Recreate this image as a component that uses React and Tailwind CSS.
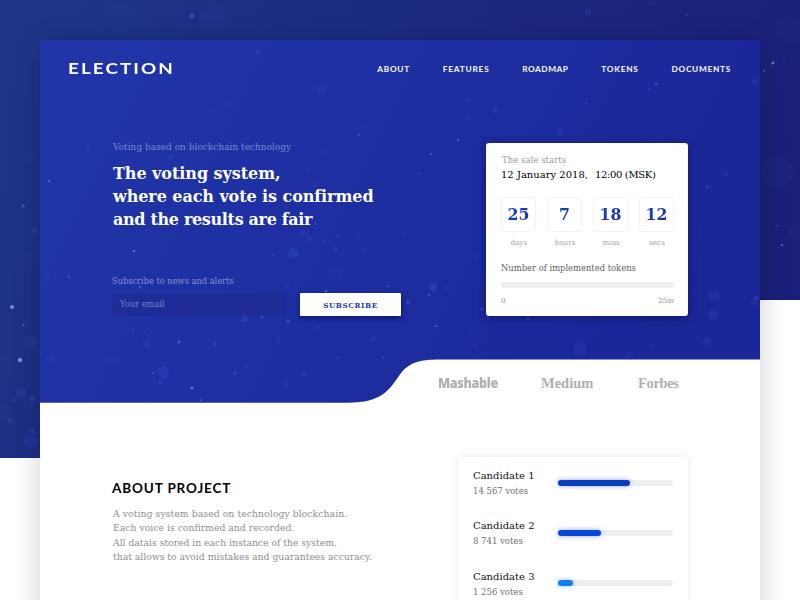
const slab = "font-['DejaVu_Serif',serif]";
const slabNarrow = "font-['DejaVu_Serif_Condensed','DejaVu_Serif',serif]";

// x, y, radius, colour, opacity
const backdropDots = [
  [192, 16, 3, '#3a52dc', 0.6], [192, 16, 1.5, '#5068f5', 0.8], [213, 20, 15, '#2a4297', 0.35],
  [120, 18, 17, '#2a4297', 0.25], [183, 26, 9, '#2a4297', 0.2], [455, 12, 18, '#2a3b9a', 0.2],
  [588, 12, 3.5, '#3046c0', 0.6], [652, 0, 6, '#3046c0', 0.25], [687, 15, 1, '#4a5cd0', 0.6],
  [773, 63, 1.5, '#8d9cf0', 0.9], [764, 71, 1, '#7080e0', 0.8], [784, 62, 3, '#2f3fa8', 0.4],
  [782, 245, 1, '#8d9cf0', 0.9], [777, 226, 1.5, '#3346b0', 0.6], [796, 232, 8, '#2a3b9a', 0.25],
  [778, 172, 16, '#24308c', 0.4], [790, 30, 14, '#26328f', 0.35],
  [23, 206, 2.5, '#3a50c4', 0.6], [23, 206, 1, '#6a7ff0', 0.7], [35, 230, 3, '#3a50c4', 0.6],
  [28, 158, 7, '#2a4297', 0.3], [38, 55, 8, '#2a4297', 0.25], [28, 258, 9, '#2a4297', 0.2],
  [12, 307, 2, '#93a4ff', 1], [23.5, 325, 1, '#7d8ff0', 0.9], [20, 360, 2.2, '#8fa0ff', 1],
  [30, 342, 7, '#2f44b0', 0.5], [5, 358, 4, '#2f44b0', 0.45], [21, 393, 5.5, '#3346b8', 0.6],
  [32, 399, 2.5, '#4258d8', 0.8], [14, 400, 1.2, '#4258d8', 0.7], [10, 421, 2.2, '#4056cc', 0.7],
  [32, 431, 3, '#3348bf', 0.7], [31, 442, 7, '#2c40b8', 0.6], [5, 412, 8, '#2a3f9f', 0.3],
];

const heroDots = [
  [218, 12, 1.5, '#3d66e0', 0.7], [281, 49, 5, '#2f50c8', 0.4], [187, 63, 3.5, '#2b48c0', 0.4],
  [170, 69, 3, '#2b48c0', 0.35], [319, 95, 1, '#6d8cf5', 0.7], [323, 90, 6, '#2b48c0', 0.25],
  [9, 141, 1, '#7d94ff', 0.9], [48, 108, 3, '#2f50c8', 0.5], [131, 117, 3.5, '#2b55d0', 0.5],
  [94, 211, 1, '#8fa8ff', 1], [29, 237, 1.2, '#5574e8', 0.7], [7, 236, 5, '#2d49c0', 0.35],
  [100, 247, 1.5, '#4d70ec', 0.8], [263, 193, 3.5, '#3457d4', 0.5], [269, 198, 3, '#3457d4', 0.45],
  [253, 213, 5, '#3c60dc', 0.6], [233, 215, 1, '#4d70ec', 0.6], [298, 196, 2, '#3457d4', 0.6],
  [295, 209, 2.5, '#3457d4', 0.5], [325, 210, 2.5, '#3457d4', 0.5], [284, 202, 1.3, '#3c60dc', 0.6],
  [276, 184, 1, '#4d70ec', 0.6], [269, 131, 1, '#4d70ec', 0.5], [286, 112, 3.5, '#2b48c0', 0.5],
  [275, 146, 4, '#2b48c0', 0.35], [319, 197, 1, '#4060dc', 0.6], [286, 251, 1.3, '#6685f2', 0.8],
  [294, 234, 8, '#2b48c0', 0.25], [348, 246, 1.2, '#4d70ec', 0.6], [247, 245, 3, '#2e4cca', 0.4],
  [429, 60, 2, '#3457d4', 0.5], [455, 70, 3, '#3457d4', 0.5], [428, 77, 5, '#2b48c0', 0.3],
  [418, 100, 1.3, '#4272ec', 0.8], [391, 114, 1.2, '#4272ec', 0.8], [520, 92, 3.5, '#2e50cc', 0.5],
  [546, 63, 1, '#5070e6', 0.6], [616, 44, 1.2, '#5070e6', 0.8], [609, 49, 1.3, '#3b58d0', 0.6],
  [715, 42, 3, '#3453cc', 0.5], [686, 133, 2.5, '#3453cc', 0.5], [667, 147, 1, '#5a78ec', 0.8],
  [363, 195, 1, '#4565e0', 0.6], [379, 133, 1, '#4565e0', 0.5], [436, 217, 3, '#2e4cca', 0.4],
  [393, 247, 4.5, '#3f63e0', 0.6], [389, 255, 1.3, '#4d70ec', 0.7], [406, 248, 1.2, '#3f63e0', 0.6],
  [674, 255, 6, '#2f50cc', 0.5], [716, 258, 1.5, '#3f63e0', 0.8], [673, 275, 5.5, '#3153d0', 0.5],
  [667, 301, 4.5, '#3153d0', 0.5], [714, 262, 3, '#2f50cc', 0.5], [612, 306, 2, '#3153d0', 0.5],
  [540, 309, 7, '#2b48c4', 0.5], [589, 316, 4, '#2b48c4', 0.5], [396, 286, 1.3, '#4d70ec', 0.8],
  [368, 262, 1.5, '#4d70ec', 0.7], [430, 292, 2.5, '#2b48c4', 0.6], [435, 306, 3, '#2b48c4', 0.5],
  [488, 279, 1.2, '#4d70ec', 0.7], [442, 269, 1.5, '#4060dc', 0.7], [448, 277, 1.5, '#4060dc', 0.5],
  [93, 289, 1, '#3f63e0', 0.6], [107, 303, 4, '#2f50cc', 0.5], [108, 296, 2, '#2f50cc', 0.5],
  [139, 302, 1.2, '#4a8af2', 1], [175, 304, 1.2, '#3f73e6', 0.8], [205, 279, 3, '#3f63e0', 0.6],
  [248, 281, 1.5, '#4d70ec', 0.7], [222, 277, 1, '#5f80f2', 0.9], [238, 299, 2.5, '#3153d0', 0.6],
  [123, 332, 6, '#3457d4', 0.55], [113, 333, 1, '#4a70ee', 0.8], [120, 343, 1, '#4a70ee', 0.6],
  [152, 348, 1.4, '#4aa0f8', 1], [161, 360, 1, '#4aa0f8', 0.7], [195, 333, 1.2, '#4a70ee', 0.7],
  [206, 325, 1.6, '#3f63e0', 0.7], [264, 333, 3, '#2f50cc', 0.5], [246, 345, 3, '#2f50cc', 0.5],
  [343, 317, 1.2, '#3f63e0', 0.6], [333, 299, 2.5, '#3f63e0', 0.5], [298, 318, 1.2, '#3f63e0', 0.5],
  [10, 318, 5, '#2b48c0', 0.4], [72, 320, 4, '#2b48c0', 0.3], [277, 287, 3, '#2b48c0', 0.3],
];

// Large discs are fainter than the bright specks.
function Dots({ items }) {
  return items.map(([x, y, r, fill, opacity], i) => (
    <circle key={i} cx={x} cy={y} r={r} fill={fill} opacity={r > 1.5 && opacity < 0.9 ? opacity * 0.45 : opacity * 0.75} />
  ));
}

function Backdrop() {
  return (
    <svg className="absolute inset-0" width="800" height="600" viewBox="0 0 800 600" aria-hidden="true">
      <defs>
        <linearGradient id="sky" x1="0" y1="0" x2="1" y2="0.25">
          <stop offset="0" stopColor="#1f3589" />
          <stop offset="0.45" stopColor="#1c2b82" />
          <stop offset="1" stopColor="#1a2079" />
        </linearGradient>
        <clipPath id="slope"><path d="M0 0H800V300H420L380 458H0Z" /></clipPath>
      </defs>
      <g clipPath="url(#slope)">
        <rect width="800" height="458" fill="url(#sky)" />
        <Dots items={backdropDots} />
      </g>
    </svg>
  );
}

function HeroArt() {
  return (
    <svg className="absolute left-0 top-0" width="720" height="363" viewBox="0 0 720 363" aria-hidden="true">
      <defs>
        <linearGradient id="hero" x1="0" y1="0.1" x2="1" y2="0.35">
          <stop offset="0" stopColor="#2036a8" />
          <stop offset="0.5" stopColor="#1d2ea1" />
          <stop offset="1" stopColor="#1b2697" />
        </linearGradient>
        <clipPath id="wave">
          <path d="M0 0H720V319.6H400C379 319.6 369 322.5 360 334.5C349 350 342 362.7 308 362.7H0Z" />
        </clipPath>
      </defs>
      <g clipPath="url(#wave)">
        <rect width="720" height="363" fill="url(#hero)" />
        <Dots items={heroDots} />
      </g>
    </svg>
  );
}

function Header() {
  return (
    <header className="flex h-[57px] items-center justify-between pl-[28px] pr-[29px] pt-[1.4px] font-['Lato',sans-serif] font-bold text-white">
      <div className="origin-left scale-x-[1.3] text-[14.5px] leading-none tracking-[1.6px]">ELECTION</div>
      <nav className="flex gap-[32.8px] text-[8.25px] font-black leading-none text-[#e9ebfa]">
        <a className="tracking-[0.72px]">ABOUT</a>
        <a className="tracking-[0.8px]">FEATURES</a>
        <a className="tracking-[0.5px]">ROADMAP</a>
        <a className="tracking-[0.75px]">TOKENS</a>
        <a className="tracking-[0.72px]">DOCUMENTS</a>
      </nav>
    </header>
  );
}

function Pitch() {
  return (
    <div className="w-[446px] pl-[72px] pt-[43px]">
      <p className="pl-px text-[9px] leading-[14px] text-[#7a86cf]">Voting based on blockchain technology</p>
      <h1 className="mt-[7.5px] whitespace-nowrap pl-px text-[16px] font-bold leading-[23px] text-white">
        <span className="block tracking-[-0.05px]">The voting system,</span>
        <span className="block tracking-[-0.08px]">where each vote is confirmed</span>
        <span className="block tracking-[-0.33px]">and the results are fair</span>
      </h1>
      <p className="mt-[43.5px] text-[8.25px] leading-[14px] text-[#8590d3]">Subscribe to news and alerts</p>
      <form className="mt-[5px] flex h-[23px] gap-[15px]">
        <div className="flex w-[173px] items-center bg-[#1f2b96] pl-2 text-[8.3px] text-[#7580c6]">Your email</div>
        <button type="button" className={`w-[101px] rounded-[1px] bg-white text-[8px] font-bold tracking-[0.57px] text-[#1f3a9c] shadow-[0_2px_5px_rgba(8,12,70,0.6)] ${slabNarrow}`}>SUBSCRIBE</button>
      </form>
    </div>
  );
}

const clock = [['25', 'days'], ['7', 'hours'], ['18', 'mins'], ['12', 'secs']];

function SaleCard() {
  return (
    <div className="mt-[46px] h-[173px] w-[202px] rounded-[3px] bg-white px-[15px] pt-[10px] shadow-[0_2px_8px_rgba(8,12,70,0.6)]">
      <p className="pl-px text-[8.5px] leading-[14px] tracking-[0.05px] text-[#9c9c9c]">The sale starts</p>
      <p className="mt-[0.5px] flex gap-[7px] whitespace-nowrap text-[10px] leading-[14px] text-black">
        <span>12 January 2018,</span>
        <span className="tracking-[-0.35px]">12:00 (MSK)</span>
      </p>
      <div className="mt-[15px] flex w-[173px] justify-between">
        {clock.map(([n, unit]) => (
          <div key={unit} className="w-[35px] text-center">
            <div className="h-[35px] rounded-[3px] border border-[#f3f3f3]">
              <div className={`bg-linear-to-br from-[#0f4ccc] to-[#1b2890] bg-clip-text text-[17.5px] font-bold leading-[33px] text-transparent ${slabNarrow}`}>{n}</div>
            </div>
            <div className="mt-[5px] pl-px text-[7.3px] leading-[12px] text-[#a0a0a0]">{unit}</div>
          </div>
        ))}
      </div>
      <p className="mt-[12px] whitespace-nowrap text-[8.4px] leading-[14px] text-[#5f6062]">Number of implemented tokens</p>
      <div className="mt-[7px] h-[6px] w-[173px] rounded-full bg-[#eeeeee]" />
      <div className="mt-[7px] flex w-[173px] justify-between text-[7.2px] leading-[12px] text-[#8c8c8c]">
        <span>0</span>
        <span>25m</span>
      </div>
    </div>
  );
}

function Partners() {
  return (
    <div className="flex h-[45px] items-center pl-[398px] leading-none text-[#b0b0b0]">
      <div className="w-[103px] font-['Open_Sans',sans-serif] text-[14px] font-extrabold">
        <span className="inline-block origin-left scale-x-90 tracking-[-0.4px]">Mashable</span>
      </div>
      <div className="w-[97px] pt-px font-['Liberation_Serif',serif] text-[14.5px] font-bold">Medium</div>
      <div className="pt-px font-['Liberation_Serif',serif] text-[14.5px] font-bold tracking-[-0.35px]">Forbes</div>
    </div>
  );
}

const candidates = [
  { name: 'Candidate 1', votes: '14 567 votes', fill: 'w-[72px] bg-[#0b3bc0] shadow-[0_0_5px_rgba(30,80,230,0.5)]' },
  { name: 'Candidate 2', votes: '8 741 votes', fill: 'w-[43px] bg-[#0a48d6] shadow-[0_0_5px_rgba(30,80,230,0.5)]' },
  { name: 'Candidate 3', votes: '1 256 votes', fill: 'w-[15px] bg-[#1080ee] shadow-[0_0_5px_rgba(30,120,240,0.5)]', label: 'pt-[2px]' },
];

function About() {
  return (
    <section className="flex">
      <div className="w-[418px] shrink-0 pl-[72px] pt-[74px]">
        <h2 className="font-['Lato',sans-serif] text-[13.5px] font-bold leading-[18px] tracking-[0.87px] text-black">ABOUT PROJECT</h2>
        <p className="mt-[9.8px] whitespace-nowrap pl-px text-[9.3px] leading-[14.4px] text-[#8e8e8e]">
          <span className="block tracking-[0.05px]">A voting system based on technology blockchain.</span>
          <span className="block">Each voice is confirmed and recorded.</span>
          <span className="block tracking-[-0.04px]">All datais stored in each instance of the system,</span>
          <span className="block tracking-[-0.03px]">that allows to avoid mistakes and guarantees accuracy.</span>
        </p>
      </div>
      <div className="mt-[52px] flex h-[160px] w-[230px] flex-col gap-[20px] rounded-[3px] bg-white pl-[15px] pt-[11px] shadow-[0_0_8px_rgba(0,0,0,0.09)]">
        {candidates.map((c) => (
          <div key={c.name} className="flex h-[30px] shrink-0 items-center">
            <div className={`w-[85px] whitespace-nowrap ${c.label ?? ''}`}>
              <div className="text-[10px] leading-[15px] text-[#111111]">{c.name}</div>
              <div className="pt-px text-[8.5px] leading-[15px] text-[#707070]">{c.votes}</div>
            </div>
            <div className="h-[6px] w-[115px] rounded-full bg-[#eeeeee]">
              <div className={`h-[6px] rounded-full ${c.fill}`} />
            </div>
          </div>
        ))}
      </div>
    </section>
  );
}

export default function App() {
  return (
    <div className={`relative h-[600px] w-[800px] overflow-hidden bg-white px-10 pt-10 ${slab}`}>
      <Backdrop />
      <main className="relative h-[600px] w-[720px] bg-white shadow-[0_4px_26px_rgba(0,0,0,0.2)]">
        <HeroArt />
        <div className="relative">
          <Header />
          <section className="flex h-[263px]">
            <Pitch />
            <SaleCard />
          </section>
          <Partners />
          <About />
        </div>
      </main>
    </div>
  );
}
